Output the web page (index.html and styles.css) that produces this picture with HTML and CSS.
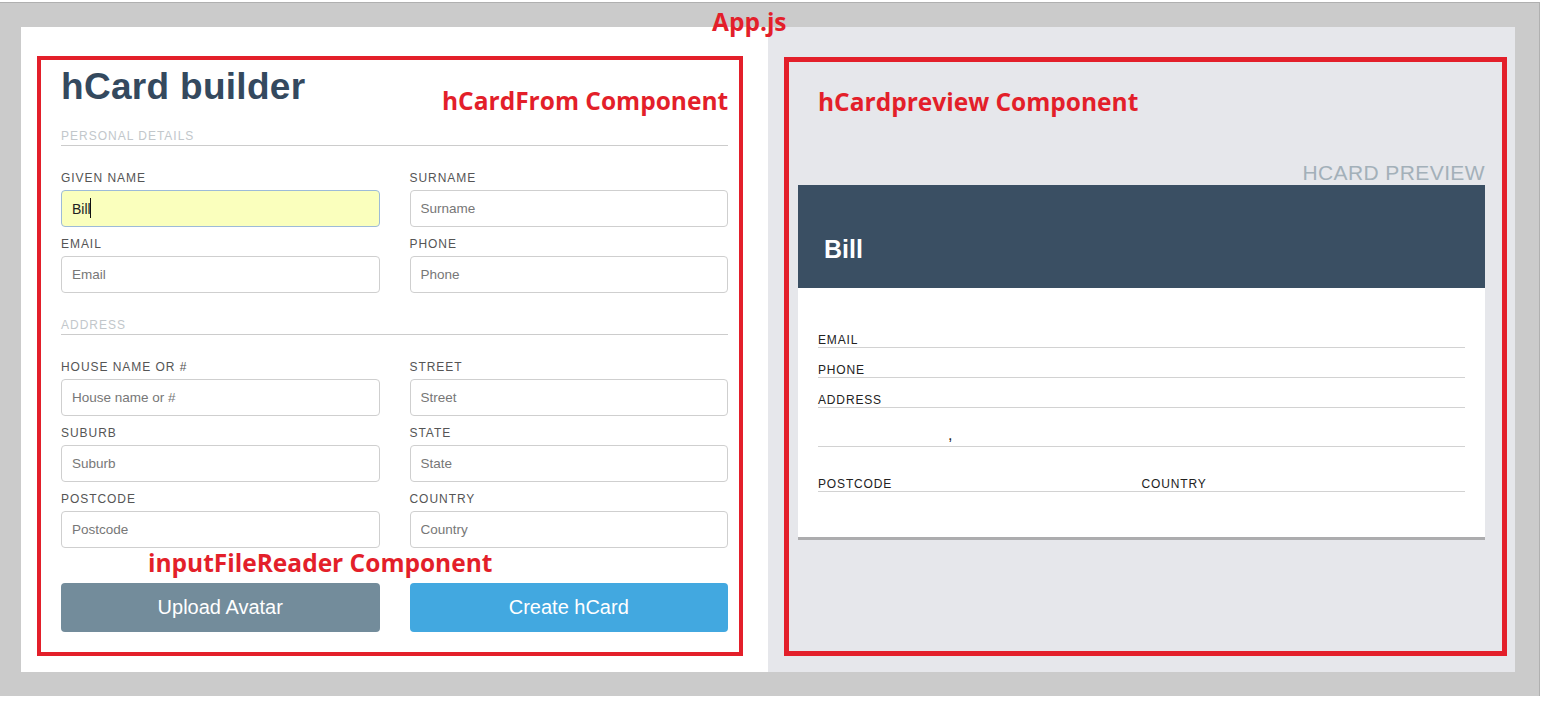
FILE: index.html
```html
<!DOCTYPE html>
<html>
<head>
    <meta charset="utf-8" />
    <title>hCard builder</title>
    <meta name="viewport" content="width=device-width, initial-scale=1">
    <link rel="stylesheet" href="styles.css">
</head>
<body>
    <div class="moldura">
        <div class="app">
            <div class="builder">
                <h1 class="titulo">hCard builder</h1>
                <h2 class="secao">Personal details</h2>
                <div class="grade">
                    <div class="campo">
                        <label>Given name</label>
                        <div class="cursor">
                            <input type="text" class="entrada preenchida" value="Bill">
                        </div>
                    </div>
                    <div class="campo">
                        <label>Surname</label>
                        <input type="text" class="entrada" placeholder="Surname">
                    </div>
                    <div class="campo">
                        <label>Email</label>
                        <input type="text" class="entrada" placeholder="Email">
                    </div>
                    <div class="campo">
                        <label>Phone</label>
                        <input type="text" class="entrada" placeholder="Phone">
                    </div>
                </div>
                <h2 class="secao secao2">Address</h2>
                <div class="grade">
                    <div class="campo">
                        <label>House name or #</label>
                        <input type="text" class="entrada" placeholder="House name or #">
                    </div>
                    <div class="campo">
                        <label>Street</label>
                        <input type="text" class="entrada" placeholder="Street">
                    </div>
                    <div class="campo">
                        <label>Suburb</label>
                        <input type="text" class="entrada" placeholder="Suburb">
                    </div>
                    <div class="campo">
                        <label>State</label>
                        <input type="text" class="entrada" placeholder="State">
                    </div>
                    <div class="campo">
                        <label>Postcode</label>
                        <input type="text" class="entrada" placeholder="Postcode">
                    </div>
                    <div class="campo">
                        <label>Country</label>
                        <input type="text" class="entrada" placeholder="Country">
                    </div>
                </div>
                <div class="botoes">
                    <button class="btn btnAvatar">Upload Avatar</button>
                    <button class="btn btnCriar">Create hCard</button>
                </div>
            </div>
            <div class="preview">
                <h2 class="previewTitulo">hCard Preview</h2>
                <div class="vcard">
                    <div class="vcardTopo">
                        <h3 class="nome">Bill</h3>
                    </div>
                    <div class="vcardCorpo">
                        <div class="linha"><span class="rotulo">Email</span></div>
                        <div class="linha"><span class="rotulo">Phone</span></div>
                        <div class="linha"><span class="rotulo">Address</span></div>
                        <div class="linha linhaCidade"><span class="cidade"></span>,</div>
                        <div class="linha linhaFinal">
                            <span class="rotulo metade">Postcode</span>
                            <span class="rotulo metade">Country</span>
                        </div>
                    </div>
                </div>
            </div>
        </div>
    </div>

    <!-- anotacoes em vermelho por cima da tela -->
    <div class="caixa caixaForm"></div>
    <div class="caixa caixaPreview"></div>
    <div class="nota notaApp">App.js</div>
    <div class="nota notaForm">hCardFrom Component</div>
    <div class="nota notaPreview">hCardpreview Component</div>
    <div class="nota notaFile">inputFileReader Component</div>
</body>
</html>
```

FILE: styles.css
```css
body{
    margin: 0;
    background: #fff;
    font-family: "Liberation Sans", Arial, sans-serif;
    position: relative;
    height: 707px;
    overflow: hidden;
}
.moldura{
    margin-top: 2px;
    width: 1540px;
    box-sizing: border-box;
    padding: 24px 24px 24px 21px;
    background: #cbcbcb;
    border-top: 1px solid #b0b0b0;
    border-right: 1px solid #b0b0b0;
}
.app{
    display: grid;
    grid-template-columns: 1fr 1fr;
}

/* formulario */
.builder{
    background: #fff;
    padding: 38px 40px 40px;
}
.titulo{
    margin: 0;
    font-size: 37px;
    line-height: 44px;
    font-weight: bold;
    letter-spacing: 0.3px;
    color: #34495e;
}
.secao{
    margin: 20px 0 0;
    font-size: 12px;
    line-height: 14px;
    font-weight: normal;
    letter-spacing: 1px;
    text-transform: uppercase;
    color: #c2c7cb;
    padding-bottom: 2px;
    border-bottom: 1px solid #cccccc;
}
.secao2{
    margin-top: 25px;
}
.grade{
    margin-top: 24px;
    display: grid;
    grid-template-columns: 1fr 1fr;
    column-gap: 30px;
    row-gap: 9px;
}
.campo label{
    display: block;
    font-size: 12px;
    line-height: 16px;
    letter-spacing: 0.95px;
    text-transform: uppercase;
    color: #555;
    margin-bottom: 4px;
}
.entrada{
    display: block;
    width: 100%;
    height: 37px;
    box-sizing: border-box;
    border: 1px solid #cfcfcf;
    border-radius: 4px;
    padding: 0 10px;
    font-family: "Liberation Sans", Arial, sans-serif;
    font-size: 13.5px;
    color: #222;
    background: #fff;
}
.entrada::placeholder{
    color: #777;
}
.preenchida{
    background: #faffbd;
    border-color: #9dbbd8;
    font-size: 14px;
}
.cursor{
    position: relative;
}
.cursor::after{
    content: "";
    position: absolute;
    left: 29px;
    top: 8px;
    width: 1px;
    height: 20px;
    background: #111;
}
.botoes{
    margin-top: 35px;
    display: grid;
    grid-template-columns: 1fr 1fr;
    column-gap: 30px;
}
.btn{
    height: 49px;
    border: none;
    border-radius: 4px;
    font-family: "Liberation Sans", Arial, sans-serif;
    font-size: 20px;
    color: #fff;
}
.btnAvatar{
    background: #738c9b;
}
.btnCriar{
    background: #42a8e0;
}

/* preview */
.preview{
    background: #e6e7eb;
    padding: 134px 30px 30px;
}
.previewTitulo{
    margin: 0;
    text-align: right;
    font-size: 21px;
    line-height: 24px;
    font-weight: normal;
    letter-spacing: 0.4px;
    text-transform: uppercase;
    color: #a3b0b9;
}
.vcardTopo{
    height: 103px;
    box-sizing: border-box;
    background: #3a4f63;
    padding: 49px 26px 0;
}
.nome{
    margin: 0;
    font-size: 25px;
    line-height: 30px;
    font-weight: bold;
    color: #fff;
}
.vcardCorpo{
    background: #fff;
    padding: 30px 20px 45px;
    border-bottom: 3px solid #acacae;
}
.linha{
    height: 29px;
    border-bottom: 1px solid #d2d2d2;
    display: flex;
    align-items: flex-end;
}
.rotulo{
    font-size: 12px;
    line-height: 14px;
    letter-spacing: 0.85px;
    text-transform: uppercase;
    color: #222;
}
.linhaCidade{
    box-sizing: border-box;
    height: 39px;
    padding-bottom: 2px;
    font-size: 16px;
    line-height: 18px;
    color: #222;
}
.cidade{
    display: inline-block;
    width: 130px;
}
.linhaFinal{
    height: 44px;
}
.metade{
    width: 50%;
}

/* anotacoes */
.caixa{
    position: absolute;
    border: 4px solid #e31f2a;
    box-sizing: border-box;
}
.caixaForm{
    left: 37px;
    top: 56px;
    width: 706px;
    height: 600px;
}
.caixaPreview{
    left: 784px;
    top: 57px;
    width: 723px;
    height: 599px;
    border-width: 5px;
}
.nota{
    position: absolute;
    font-family: "Open Sans", sans-serif;
    font-weight: bold;
    font-size: 24.5px;
    line-height: 24px;
    color: #e31f2a;
    white-space: nowrap;
}
.notaApp{
    left: 712px;
    top: 10px;
}
.notaForm{
    left: 442px;
    top: 89px;
}
.notaPreview{
    left: 818px;
    top: 90px;
}
.notaFile{
    left: 148px;
    top: 551px;
}
```
